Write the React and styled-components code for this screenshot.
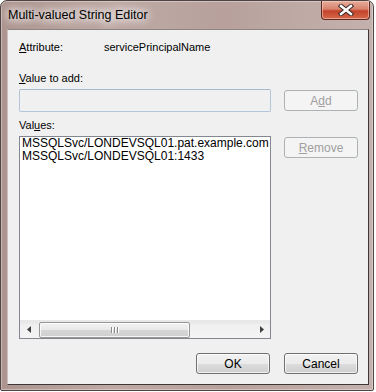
import React from 'react';
import styled, { createGlobalStyle } from 'styled-components';

const GlobalStyle = createGlobalStyle`
  html, body {
    margin: 0;
    padding: 0;
    background: #ffffff;
  }
  body {
    font-family: "Liberation Sans", Arial, sans-serif;
  }
`;

// marco de la ventana
const Ventana = styled.div`
  width: 372px;
  height: 389px;
  display: flex;
  flex-direction: column;
  border: 1px solid #4f4442;
  border-radius: 7px 7px 2px 2px;
  background: linear-gradient(90deg, #ad948f 0%, #bea9a4 30%, #b8a19c 60%, #c4b1ad 100%);
  box-shadow: inset 0 0 0 1px rgba(255, 255, 255, 0.35);
  overflow: hidden;
`;

const BarraTitulo = styled.div`
  height: 28px;
  display: flex;
  align-items: flex-start;
  justify-content: space-between;
  padding-left: 7px;
`;

const Titulo = styled.span`
  margin-top: 7px;
  font-size: 12.5px;
  color: #000;
  text-shadow: 0 0 8px #ffffff, 0 0 10px #ffffff, 0 0 14px rgba(255,255,255,0.9);
`;

const BotonCerrar = styled.div`
  width: 47px;
  height: 18px;
  margin-right: 3px;
  border: 1px solid #5e2a22;
  border-top: none;
  border-radius: 0 0 4px 4px;
  background: linear-gradient(180deg, #e6ac9c 0%, #d8826c 45%, #c4432a 55%, #d4694a 100%);
  box-shadow: inset 0 0 0 1px rgba(255, 220, 210, 0.5);
  display: flex;
  align-items: center;
  justify-content: center;
`;

const Cliente = styled.div`
  flex: 1;
  margin: 0 4px 5px 6px;
  background: #f0f0f0;
  border-top: 1px solid #8d8583;
  border-left: 1px solid #c9c0be;
  border-right: 1px solid #3d3837;
  border-bottom: 1px solid #3d3837;
  padding: 10px 10px 0 11px;
  display: flex;
  flex-direction: column;
  font-size: 11px;
  color: #000;
`;

const FilaAtributo = styled.div`
  display: flex;
  line-height: 14px;
`;

const EtiquetaAtributo = styled.span`
  width: 85px;
`;

const Etiqueta = styled.div`
  line-height: 14px;
  margin-top: ${(p) => p.$arriba}px;
`;

const Fila = styled.div`
  display: flex;
  align-items: flex-start;
  gap: 13px;
  margin-top: ${(p) => p.$arriba}px;
`;

const CajaTexto = styled.div`
  width: 250px;
  height: 21px;
  border: 1px solid #b3c6da;
  border-top-color: #a7b9cc;
  border-radius: 2px;
  background: #f0f0f0;
`;

const Boton = styled.div`
  width: 72px;
  height: 19px;
  margin-top: ${(p) => p.$arriba || 0}px;
  border: 1px solid ${(p) => (p.$inactivo ? '#adb2b5' : '#707070')};
  border-radius: 3px;
  background: ${(p) =>
    p.$inactivo
      ? '#f4f4f4'
      : 'linear-gradient(180deg, #f2f2f2 0%, #ebebeb 50%, #dddddd 51%, #cfcfcf 100%)'};
  box-shadow: inset 0 0 0 1px ${(p) => (p.$inactivo ? '#f4f4f4' : 'rgba(255,255,255,0.7)')};
  color: ${(p) => (p.$inactivo ? '#a0a0a0' : '#000')};
  font-size: 12px;
  display: flex;
  align-items: center;
  justify-content: center;
`;

const Lista = styled.div`
  width: 250px;
  height: 201px;
  border: 1px solid #828790;
  background: #ffffff;
  display: flex;
  flex-direction: column;
`;

const Elementos = styled.div`
  flex: 1;
  padding: 0 2px;
  font-size: 12px;
  line-height: 13px;
  white-space: nowrap;
  overflow: hidden;
`;

const BarraDesplazamiento = styled.div`
  height: 17px;
  display: flex;
  align-items: center;
  background: linear-gradient(180deg, #e6e6e6 0%, #f0f0f0 25%, #f4f4f4 100%);
  border-top: 1px solid #e9e9e9;
`;

const Flecha = styled.div`
  width: 17px;
  height: 17px;
  display: flex;
  align-items: center;
  justify-content: center;
`;

const Pista = styled.div`
  flex: 1;
  height: 17px;
  display: flex;
  align-items: center;
`;

const Pulgar = styled.div`
  width: 149px;
  height: 14px;
  margin-left: 2px;
  border: 1px solid #979797;
  border-radius: 2px;
  background: linear-gradient(180deg, #f3f3f3 0%, #e8e8e8 50%, #d6d6d6 51%, #cfcfcf 100%);
  box-shadow: inset 0 0 0 1px rgba(255,255,255,0.8);
  display: flex;
  align-items: center;
  justify-content: center;
  gap: 2px;
`;

const Ranura = styled.span`
  width: 1px;
  height: 6px;
  background: #8a8a8a;
  box-shadow: 1px 0 0 #ffffff;
`;

const PieBotones = styled.div`
  display: flex;
  justify-content: flex-end;
  gap: 14px;
  margin-top: 14px;
`;

function IconoCerrar() {
  return (
    <svg width="16" height="12" viewBox="0 0 16 12">
      <path d="M3 2 L13 10 M13 2 L3 10" stroke="#3a2a28" strokeWidth="4.4" strokeLinecap="square" />
      <path d="M3 2 L13 10 M13 2 L3 10" stroke="#ffffff" strokeWidth="2.4" strokeLinecap="square" />
    </svg>
  );
}

function FlechaIzq() {
  return (
    <svg width="4" height="7" viewBox="0 0 4 7">
      <path d="M4 0 L0 3.5 L4 7 Z" fill="#404040" />
    </svg>
  );
}

function FlechaDer() {
  return (
    <svg width="4" height="7" viewBox="0 0 4 7">
      <path d="M0 0 L4 3.5 L0 7 Z" fill="#404040" />
    </svg>
  );
}

export default function App() {
  return (
    <>
      <GlobalStyle />
      <Ventana>
        <BarraTitulo>
          <Titulo>Multi-valued String Editor</Titulo>
          <BotonCerrar>
            <IconoCerrar />
          </BotonCerrar>
        </BarraTitulo>
        <Cliente>
          <FilaAtributo>
            <EtiquetaAtributo><u>A</u>ttribute:</EtiquetaAtributo>
            <span>servicePrincipalName</span>
          </FilaAtributo>

          <Etiqueta $arriba={17}><u>V</u>alue to add:</Etiqueta>
          <Fila $arriba={4}>
            <CajaTexto />
            <Boton $inactivo $arriba={1}>A<u>d</u>d</Boton>
          </Fila>

          <Etiqueta $arriba={6}>Val<u>u</u>es:</Etiqueta>
          <Fila $arriba={4}>
            <Lista>
              <Elementos>
                <div>MSSQLSvc/LONDEVSQL01.pat.example.com</div>
                <div>MSSQLSvc/LONDEVSQL01:1433</div>
              </Elementos>
              <BarraDesplazamiento>
                <Flecha><FlechaIzq /></Flecha>
                <Pista>
                  <Pulgar>
                    <Ranura />
                    <Ranura />
                    <Ranura />
                  </Pulgar>
                </Pista>
                <Flecha><FlechaDer /></Flecha>
              </BarraDesplazamiento>
            </Lista>
            <Boton $inactivo $arriba={1}><u>R</u>emove</Boton>
          </Fila>

          <PieBotones>
            <Boton>OK</Boton>
            <Boton>Cancel</Boton>
          </PieBotones>
        </Cliente>
      </Ventana>
    </>
  );
}
